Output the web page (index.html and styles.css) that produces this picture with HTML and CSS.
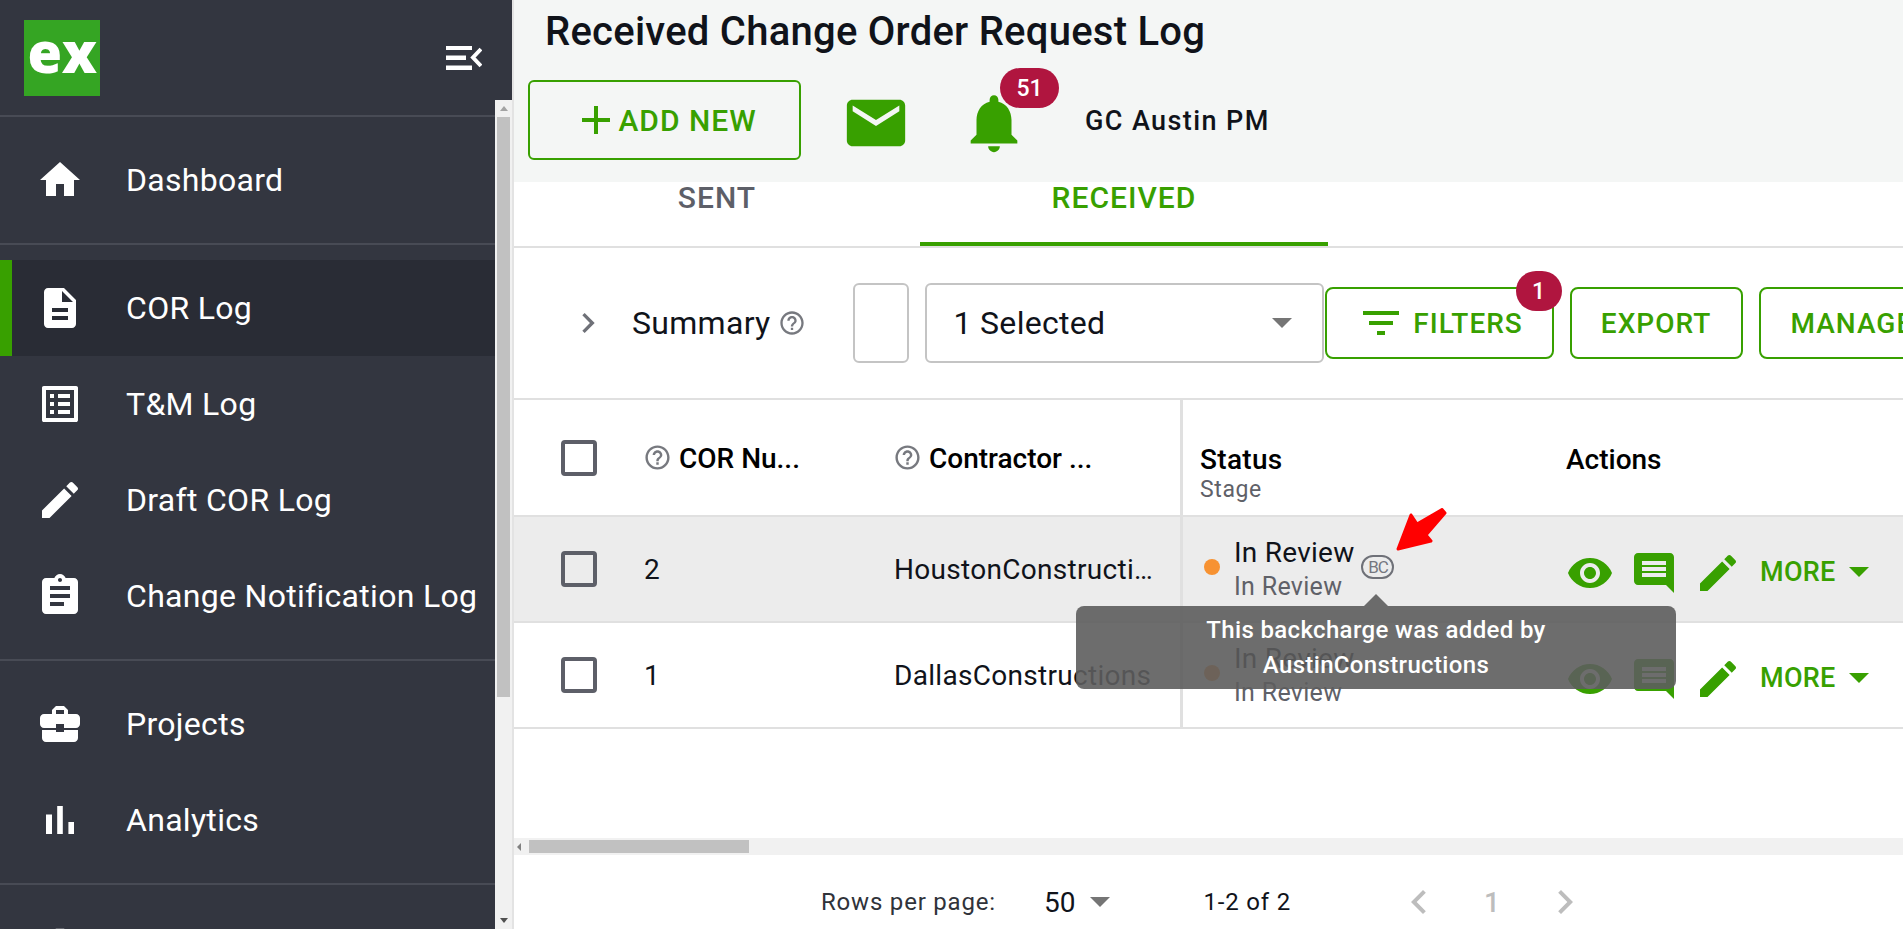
FILE: index.html
```html
<!DOCTYPE html>
<html lang="en">
<head>
<meta charset="utf-8">
<title>Received Change Order Request Log</title>
<link rel="stylesheet" href="styles.css">
</head>
<body>
<div class="app">
  <aside class="side">
    <div class="brand">
      <div class="logo">ex</div>
      <svg class="collapse" viewBox="0 0 36 24" width="36" height="24"><path fill="#fff" d="M0 0h26v4H0zM0 9.500h20v4.500H0zM0 19.500h26V24H0z"/><path fill="none" stroke="#fff" stroke-width="4" d="M35 3l-8 8.500 8 8.500"/></svg>
    </div>
    <div class="navwrap">
      <nav class="nav">
        <div class="navgroup first">
          <a class="item"><svg class="ico" viewBox="0 0 24 24"><path d="M10 20v-6h4v6h5v-8h3L12 3 2 12h3v8z"/></svg><span>Dashboard</span></a>
        </div>
        <div class="navgroup">
          <a class="item active"><svg class="ico" viewBox="0 0 24 24"><path d="M14 2H6c-1.100 0-1.990.9-1.990 2L4 20c0 1.100.89 2 1.990 2H18c1.100 0 2-.9 2-2V8l-6-6zm2 16H8v-2h8v2zm0-4H8v-2h8v2zm-3-5V3.500L18.500 9H13z"/></svg><span>COR Log</span></a>
          <a class="item"><svg class="ico" viewBox="0 0 24 24"><path d="M19 5v14H5V5h14m1.100-2H3.900c-.5 0-.9.4-.9.9v16.200c0 .4.4.9.9.9h16.200c.4 0 .9-.5.9-.9V3.900c0-.5-.5-.9-.9-.9zM11 7h6v2h-6V7zm0 4h6v2h-6v-2zm0 4h6v2h-6zM7 7h2v2H7zm0 4h2v2H7zm0 4h2v2H7z"/></svg><span>T&amp;M Log</span></a>
          <a class="item"><svg class="ico" viewBox="0 0 24 24"><path d="M3 17.250V21h3.750L17.810 9.940l-3.750-3.750L3 17.250zM20.710 7.040c.39-.39.39-1.020 0-1.410l-2.340-2.340c-.39-.39-1.020-.39-1.410 0l-1.830 1.830 3.750 3.750 1.830-1.830z"/></svg><span>Draft COR Log</span></a>
          <a class="item"><svg class="ico" viewBox="0 0 24 24"><path d="M19 3h-4.180C14.400 1.840 13.300 1 12 1c-1.300 0-2.400.84-2.820 2H5c-1.100 0-2 .9-2 2v14c0 1.100.9 2 2 2h14c1.100 0 2-.9 2-2V5c0-1.100-.9-2-2-2zm-7 0c.55 0 1 .45 1 1s-.45 1-1 1-1-.45-1-1 .45-1 1-1zm2 14H7v-2h7v2zm3-4H7v-2h10v2zm0-4H7V7h10v2z"/></svg><span>Change Notification Log</span></a>
        </div>
        <div class="navgroup">
          <a class="item"><svg class="ico" viewBox="0 0 24 24"><path d="M10 16v-1H3.010L3 19c0 1.110.89 2 2 2h14c1.110 0 2-.89 2-2v-4h-7v1h-4zm10-9h-4.010V5l-2-2h-4l-2 2v2H4c-1.100 0-2 .9-2 2v3c0 1.110.89 2 2 2h6v-2h4v2h6c1.100 0 2-.9 2-2V9c0-1.100-.9-2-2-2zm-6 0h-4V5h4v2z"/></svg><span>Projects</span></a>
          <a class="item"><svg class="ico" viewBox="0 0 24 24"><path d="M5 9.200h3V19H5zM10.600 5h2.800v14h-2.800zm5.600 8H19v6h-2.800z"/></svg><span>Analytics</span></a>
        </div>
        <div class="navgroup">
          <a class="item"><svg class="ico" viewBox="0 0 24 24"><path d="M19.140 12.940c.04-.3.06-.61.06-.94 0-.32-.02-.64-.07-.94l2.030-1.580c.18-.14.23-.41.12-.61l-1.920-3.320c-.12-.22-.37-.29-.59-.22l-2.390.96c-.5-.38-1.030-.7-1.620-.94l-.36-2.540c-.04-.24-.24-.41-.48-.41h-3.840c-.24 0-.43.17-.47.41l-.36 2.540c-.59.24-1.130.57-1.620.94l-2.390-.96c-.22-.08-.47 0-.59.22L2.740 8.870c-.12.21-.08.47.12.61l2.030 1.580c-.05.3-.09.63-.09.94s.02.64.07.94l-2.030 1.580c-.18.14-.23.41-.12.61l1.920 3.320c.12.22.37.29.59.22l2.390-.96c.5.38 1.030.7 1.620.94l.36 2.540c.05.24.24.41.48.41h3.840c.24 0 .44-.17.47-.41l.36-2.540c.59-.24 1.130-.56 1.620-.94l2.390.96c.22.08.47 0 .59-.22l1.920-3.320c.12-.22.07-.47-.12-.61l-2.010-1.580zM12 15.600c-1.980 0-3.600-1.620-3.600-3.600s1.620-3.600 3.600-3.600 3.600 1.620 3.600 3.600-1.620 3.600-3.600 3.600z"/></svg></a>
        </div>
      </nav>
      <div class="vbar">
        <i class="arrow-up"></i>
        <div class="vthumb"></div>
        <i class="arrow-down"></i>
      </div>
    </div>
  </aside>

  <main class="main">
    <header class="top">
      <h1 class="title">Received Change Order Request Log</h1>
      <div class="topactions">
        <button class="addnew"><svg class="ico48" viewBox="0 0 24 24"><path d="M19 13h-6v6h-2v-6H5v-2h6V5h2v6h6v2z"/></svg><span>ADD NEW</span></button>
        <svg class="ico70 mail" viewBox="0 0 24 24"><path d="M20 4H4c-1.100 0-1.990.9-1.990 2L2 18c0 1.100.9 2 2 2h16c1.100 0 2-.9 2-2V6c0-1.100-.9-2-2-2zm0 4l-8 5-8-5V6l8 5 8-5v2z"/></svg>
        <div class="bell">
          <svg class="ico70" viewBox="0 0 24 24"><path d="M12 22c1.100 0 2-.9 2-2h-4c0 1.100.89 2 2 2zm6-6v-5c0-3.070-1.640-5.640-4.500-6.320V4c0-.83-.67-1.500-1.500-1.500s-1.500.67-1.500 1.500v.68C7.630 5.360 6 7.920 6 11v5l-2 2v1h16v-1l-2-2z"/></svg>
          <span class="badge count">51</span>
        </div>
        <span class="user">GC Austin PM</span>
      </div>
    </header>

    <div class="tabs">
      <div class="tab">SENT</div>
      <div class="tab on">RECEIVED</div>
    </div>

    <div class="toolbar">
      <svg class="chev" viewBox="0 0 24 24"><path d="M10 6L8.590 7.410 13.170 12l-4.580 4.590L10 18l6-6z"/></svg>
      <span class="summary">Summary</span>
      <svg class="help big" viewBox="0 0 24 24"><path d="M11 18h2v-2h-2v2zm1-16C6.480 2 2 6.480 2 12s4.480 10 10 10 10-4.480 10-10S17.520 2 12 2zm0 18c-4.410 0-8-3.590-8-8s3.590-8 8-8 8 3.590 8 8-3.590 8-8 8zm0-14c-2.210 0-4 1.790-4 4h2c0-1.100.9-2 2-2s2 .9 2 2c0 2-3 1.750-3 5h2c0-2.250 3-2.500 3-5 0-2.210-1.790-4-4-4z"/></svg>
      <div class="box"></div>
      <div class="select"><span>1 Selected</span><i class="caret grey"></i></div>
      <button class="btn filters"><svg class="ico48" viewBox="0 0 24 24"><path d="M10 18h4v-2h-4v2zM3 6v2h18V6H3zm3 7h12v-2H6v2z"/></svg><span>FILTERS</span><span class="badge one">1</span></button>
      <button class="btn export">EXPORT</button>
      <button class="btn manage">MANAGE COLUMNS</button>
    </div>

    <section class="tbl">
      <div class="row head">
        <div class="cell chk"><i class="check"></i></div>
        <div class="cell hd"><svg class="help" viewBox="0 0 24 24"><path d="M11 18h2v-2h-2v2zm1-16C6.480 2 2 6.480 2 12s4.480 10 10 10 10-4.480 10-10S17.520 2 12 2zm0 18c-4.410 0-8-3.590-8-8s3.590-8 8-8 8 3.590 8 8-3.590 8-8 8zm0-14c-2.210 0-4 1.790-4 4h2c0-1.100.9-2 2-2s2 .9 2 2c0 2-3 1.750-3 5h2c0-2.250 3-2.500 3-5 0-2.210-1.790-4-4-4z"/></svg><b>COR Nu...</b></div>
        <div class="cell hd"><svg class="help" viewBox="0 0 24 24"><path d="M11 18h2v-2h-2v2zm1-16C6.480 2 2 6.480 2 12s4.480 10 10 10 10-4.480 10-10S17.520 2 12 2zm0 18c-4.410 0-8-3.590-8-8s3.590-8 8-8 8 3.590 8 8-3.590 8-8 8zm0-14c-2.210 0-4 1.790-4 4h2c0-1.100.9-2 2-2s2 .9 2 2c0 2-3 1.750-3 5h2c0-2.250 3-2.500 3-5 0-2.210-1.790-4-4-4z"/></svg><b>Contractor ...</b></div>
        <div class="cell sticky hstack"><b>Status</b><small>Stage</small></div>
        <div class="cell hact"><b>Actions</b></div>
      </div>

      <div class="row hover">
        <div class="cell chk"><i class="check"></i></div>
        <div class="cell val">2</div>
        <div class="cell val clip"><span>HoustonConstructions</span></div>
        <div class="cell sticky st"><i class="dot"></i><div class="stack"><span>In Review</span><small>In Review</small></div><span class="bc">BC</span></div>
        <div class="cell act">
          <svg class="ico48" viewBox="0 0 24 24"><path d="M12 4.500C7 4.500 2.730 7.610 1 12c1.730 4.390 6 7.500 11 7.500s9.270-3.110 11-7.500c-1.730-4.390-6-7.500-11-7.500zM12 17c-2.760 0-5-2.240-5-5s2.240-5 5-5 5 2.240 5 5-2.240 5-5 5zm0-8c-1.660 0-3 1.340-3 3s1.340 3 3 3 3-1.340 3-3-1.340-3-3-3z"/></svg>
          <svg class="ico48" viewBox="0 0 24 24"><path d="M21.990 4c0-1.100-.89-2-1.990-2H4c-1.100 0-2 .9-2 2v12c0 1.100.9 2 2 2h14l4 4-.01-18zM18 14H6v-2h12v2zm0-3H6V9h12v2zm0-3H6V6h12v2z"/></svg>
          <svg class="ico48" viewBox="0 0 24 24"><path d="M3 17.250V21h3.750L17.810 9.940l-3.750-3.750L3 17.250zM20.710 7.040c.39-.39.39-1.020 0-1.410l-2.340-2.340c-.39-.39-1.020-.39-1.410 0l-1.830 1.830 3.750 3.750 1.830-1.830z"/></svg>
          <span class="more">MORE</span><i class="caret green"></i>
        </div>
      </div>

      <div class="row">
        <div class="cell chk"><i class="check"></i></div>
        <div class="cell val">1</div>
        <div class="cell val clip"><span>DallasConstructions</span></div>
        <div class="cell sticky st"><i class="dot"></i><div class="stack"><span>In Review</span><small>In Review</small></div></div>
        <div class="cell act">
          <svg class="ico48" viewBox="0 0 24 24"><path d="M12 4.500C7 4.500 2.730 7.610 1 12c1.730 4.390 6 7.500 11 7.500s9.270-3.110 11-7.500c-1.730-4.390-6-7.500-11-7.500zM12 17c-2.760 0-5-2.240-5-5s2.240-5 5-5 5 2.240 5 5-2.240 5-5 5zm0-8c-1.660 0-3 1.340-3 3s1.340 3 3 3 3-1.340 3-3-1.340-3-3-3z"/></svg>
          <svg class="ico48" viewBox="0 0 24 24"><path d="M21.990 4c0-1.100-.89-2-1.990-2H4c-1.100 0-2 .9-2 2v12c0 1.100.9 2 2 2h14l4 4-.01-18zM18 14H6v-2h12v2zm0-3H6V9h12v2zm0-3H6V6h12v2z"/></svg>
          <svg class="ico48" viewBox="0 0 24 24"><path d="M3 17.250V21h3.750L17.810 9.940l-3.750-3.750L3 17.250zM20.710 7.040c.39-.39.39-1.020 0-1.410l-2.340-2.340c-.39-.39-1.020-.39-1.410 0l-1.830 1.830 3.750 3.750 1.830-1.830z"/></svg>
          <span class="more">MORE</span><i class="caret green"></i>
        </div>
      </div>

      <div class="tooltip">This backcharge was added by<br>AustinConstructions</div>
      <svg class="redarrow" viewBox="0 0 52 44" width="52" height="44"><path fill="#f00" stroke="#f00" stroke-width="3" stroke-linejoin="round" d="M2 41L15 7l6 9L46 1.500l3 3.500-19 22 5 6z"/></svg>
    </section>

    <div class="hbar"><i class="arrow-left"></i><div class="hthumb"></div></div>

    <footer class="pager">
      <span class="rpp">Rows per page:</span>
      <span class="size">50</span><i class="caret grey"></i>
      <span class="range">1-2 of 2</span>
      <svg class="pchev prev" viewBox="0 0 24 24"><path d="M15.410 7.410L14 6l-6 6 6 6 1.410-1.410L10.830 12z"/></svg>
      <span class="page">1</span>
      <svg class="pchev" viewBox="0 0 24 24"><path d="M10 6L8.590 7.410 13.170 12l-4.580 4.590L10 18l6-6z"/></svg>
    </footer>
  </main>
</div>
</body>
</html>
```
FILE: styles.css
```css
* { box-sizing: border-box; }
html, body { margin: 0; height: 100%; overflow: hidden; }
body { font-family: Roboto, "Liberation Sans", sans-serif; color: #10131a; background: #fff; }
.app { display: flex; width: 1903px; height: 929px; }

/* sidebar */
.side { width: 512px; flex: none; background: #333640; display: flex; flex-direction: column; color: #fff; }
.brand { height: 100px; flex: none; padding: 20px 30px 0 24px; display: flex; justify-content: space-between; align-items: flex-start; }
.logo { width: 76px; height: 76px; background: #35a523; color: #fff; font: 800 56px/63px "Open Sans", sans-serif; letter-spacing: -.5px; text-align: center; }
.collapse { margin-top: 26px; }
.navwrap { flex: 1; display: flex; min-height: 0; }
.nav { flex: 1; min-width: 0; overflow: hidden; }
.navgroup { border-top: 2px solid #484b55; padding: 15px 0; }
.navgroup.first { margin-top: 15px; }
.item { display: flex; align-items: center; height: 96px; padding-left: 36px; font-size: 32px; letter-spacing: .3px; white-space: nowrap; }
.item span { margin-left: 42px; }
.item.active { background: #292c35; box-shadow: inset 12px 0 0 #38a000; }
.ico { width: 48px; height: 48px; fill: #fff; flex: none; }
.vbar { width: 17px; flex: none; background: #f1f1f1; display: flex; flex-direction: column; align-items: center; }
.arrow-up { width: 0; height: 0; border: 4px solid transparent; border-top: 0; border-bottom: 5px solid #a3a3a3; margin: 6px 0 6px; }
.vthumb { width: 13px; height: 580px; background: #c1c1c1; }
.arrow-down { width: 0; height: 0; border: 4px solid transparent; border-bottom: 0; border-top: 5px solid #505050; margin-top: auto; margin-bottom: 6px; }

/* main */
.main { flex: 1; min-width: 0; border-left: 2px solid #e3e3e3; display: flex; flex-direction: column; position: relative; overflow: hidden; }
.top { height: 182px; flex: none; background: #f4f6f5; }
.title { margin: 0; height: 64px; padding-left: 31px; font-size: 40px; line-height: 64px; letter-spacing: .25px; font-weight: 500; white-space: nowrap; }
.topactions { display: flex; align-items: center; margin-top: 16px; padding-left: 14px; }
.ico48 { width: 48px; height: 48px; fill: #38a000; flex: none; }
.ico70 { width: 70px; height: 70px; fill: #38a000; display: block; }
.addnew { width: 273px; height: 80px; background: transparent; border: 2px solid #38a000; border-radius: 6px; display: flex; align-items: center; justify-content: center; padding: 0; font: 500 30px Roboto, sans-serif; letter-spacing: 1px; color: #38a000; white-space: nowrap; }
.addnew svg { margin-right: -2px; }
.mail { margin: 6px 0 0 40px; flex: none; }
.bell { position: relative; margin: 6px 0 0 48px; flex: none; }
.badge { position: absolute; background: #b0153f; color: #fff; font-weight: 500; display: flex; align-items: center; justify-content: center; }
.count { left: 41px; top: -20px; width: 59px; height: 40px; border-radius: 20px; font-size: 23px; }
.user { margin: 2px 0 0 56px; font-size: 27px; font-weight: 500; letter-spacing: 1.4px; white-space: nowrap; }

/* tabs */
.tabs { display: flex; height: 66px; flex: none; border-bottom: 2px solid #e0e0e0; }
.tab { width: 406px; padding-top: 1px; text-align: center; font-size: 30px; font-weight: 500; line-height: 30px; letter-spacing: 1px; color: #5d5f68; }
.tab.on { width: 408px; color: #38a000; border-bottom: 4px solid #38a000; }

/* toolbar */
.toolbar { display: flex; align-items: center; height: 152px; flex: none; border-bottom: 2px solid #e0e0e0; padding-left: 54px; white-space: nowrap; }
.chev { width: 40px; height: 40px; fill: #6f7178; flex: none; }
.summary { margin-left: 24px; font-size: 32px; letter-spacing: .3px; }
.help { width: 29px; height: 29px; fill: #77797f; flex: none; }
.help.big { width: 28px; height: 28px; margin-left: 7px; }
.box { width: 56px; height: 80px; border: 2px solid #c4c4c4; border-radius: 6px; margin-left: 47px; flex: none; }
.select { width: 399px; height: 80px; border: 2px solid #c4c4c4; border-radius: 6px; margin-left: 16px; flex: none; display: flex; align-items: center; justify-content: space-between; padding: 0 30px 0 27px; font-size: 32px; letter-spacing: .3px; }
.caret { width: 0; height: 0; border-style: solid; border-color: transparent; border-width: 10px 10px 0; flex: none; display: block; }
.caret.grey { border-top-color: #757575; }
.caret.green { border-top-color: #38a000; }
.btn { height: 72px; background: #fff; border: 2px solid #38a000; border-radius: 8px; color: #38a000; font: 500 28px Roboto, sans-serif; letter-spacing: 1px; display: flex; align-items: center; justify-content: center; flex: none; position: relative; padding: 0; white-space: nowrap; }
.filters { width: 229px; margin-left: 1px; padding-left: 2px; }
.filters span:first-of-type { margin-left: 8px; }
.one { left: 189px; top: -18px; width: 46px; height: 40px; border-radius: 20px; font-size: 23px; letter-spacing: 0; margin: 0; }
.export { width: 173px; margin-left: 16px; }
.manage { width: 340px; margin-left: 16px; justify-content: flex-start; padding-left: 30px; }

/* table */
.tbl { position: relative; flex: 1; min-height: 0; }
.row { display: grid; grid-template-columns: 117px 250px 299px 370px 1fr; height: 106px; border-bottom: 2px solid #e0e0e0; }
.row.head { height: 117px; }
.row.hover { background: #ececec; }
.cell { display: flex; align-items: center; padding-left: 13px; min-width: 0; font-size: 28px; white-space: nowrap; }
.cell.chk { padding-left: 47px; }
.check { width: 36px; height: 36px; border: 4px solid #5d5f68; border-radius: 4px; display: block; }
.cell b { font-weight: 500; color: #000; }
.hd { padding-left: 12px; }
.hd b { margin: 2px 0 0 7px; }
.sticky { border-left: 3px solid #e0e0e0; }
.hstack { flex-direction: column; align-items: flex-start; justify-content: flex-start; padding: 45px 0 0 17px; line-height: 30px; }
.hstack b { letter-spacing: .3px; }
.hstack small { font-size: 23px; color: #5f6168; letter-spacing: .6px; }
.hact { padding: 3px 0 0 16px; }
.val { letter-spacing: .3px; padding-top: 1px; }
.clip { padding-right: 22px; }
.clip span { display: block; overflow: hidden; text-overflow: ellipsis; }
.st { padding-left: 21px; }
.dot { width: 16px; height: 16px; border-radius: 50%; background: #f79232; margin-top: -4px; flex: none; }
.stack { display: flex; flex-direction: column; margin-left: 14px; line-height: 34px; padding-top: 2px; letter-spacing: .25px; }
.stack small { font-size: 25px; color: #5f6168; letter-spacing: .3px; }
.bc { margin: -4px 0 0 7px; width: 33px; height: 24px; border: 2px solid #6f7178; border-radius: 12px; color: #75777f; font-size: 17px; letter-spacing: -1px; display: flex; align-items: center; justify-content: center; }
.act { padding: 8px 0 0 16px; }
.act svg + svg { margin-left: 16px; }
.more { margin-left: 18px; color: #38a000; font-size: 27px; font-weight: 500; letter-spacing: .3px; margin-top: -2px; }
.act .caret { margin: -2px 0 0 13px; }

/* tooltip */
.tooltip { position: absolute; left: 562px; top: 206px; width: 600px; height: 83px; background: rgba(93, 93, 93, .9); border-radius: 8px; color: #fff; font-size: 24px; letter-spacing: .35px; font-weight: 500; line-height: 35px; text-align: center; padding-top: 7px; }
.tooltip::before { content: ""; position: absolute; left: 288px; top: -12px; border-style: solid; border-color: transparent; border-width: 0 12px 12px; border-bottom-color: rgba(93, 93, 93, .9); }
.redarrow { position: absolute; left: 882px; top: 108px; }

/* bottom */
.hbar { height: 17px; flex: none; background: #f1f1f1; display: flex; align-items: center; padding-left: 3px; }
.arrow-left { width: 0; height: 0; border: 4px solid transparent; border-left: 0; border-right: 4px solid #808080; }
.hthumb { width: 220px; height: 13px; margin-left: 8px; background: #c1c1c1; }
.pager { height: 74px; flex: none; display: flex; align-items: center; padding: 20px 0 0 307px; font-size: 24px; letter-spacing: .8px; }
.rpp { width: 223px; color: #30333a; }
.size { font-size: 28px; letter-spacing: 0; }
.pager .caret { margin-left: 15px; }
.range { margin-left: 93px; }
.pchev { width: 48px; height: 48px; fill: #bdbdbd; flex: none; }
.prev { margin-left: 104px; }
.page { margin: 0 41px; color: #bdbdbd; font-size: 28px; font-weight: 500; letter-spacing: 0; }
```
